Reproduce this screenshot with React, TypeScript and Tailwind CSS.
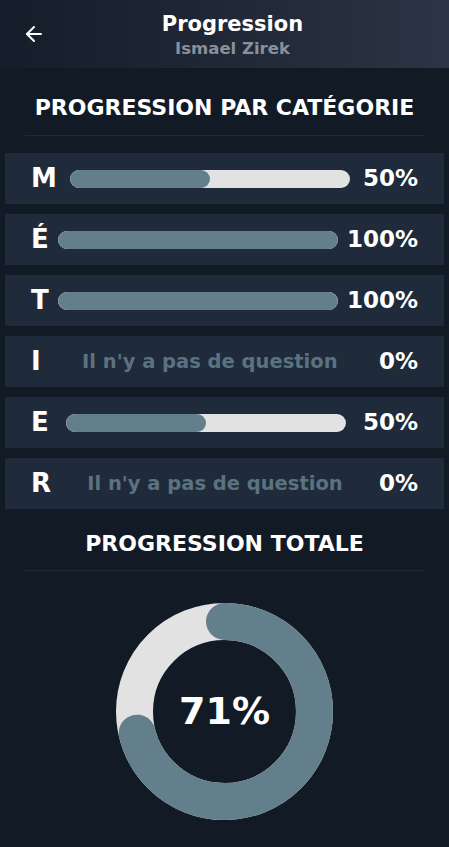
import { ArrowLeft } from "lucide-react";

const font = { fontFamily: "'DejaVu Sans', 'Noto Sans', sans-serif" };

type Cat = { letter: string; value: number | null };

const cats: Cat[] = [
  { letter: "M", value: 50 },
  { letter: "É", value: 100 },
  { letter: "T", value: 100 },
  { letter: "I", value: null },
  { letter: "E", value: 50 },
  { letter: "R", value: null },
];

function Row({ cat }: { cat: Cat }) {
  return (
    <div className="flex h-[51px] items-center justify-between bg-[#1f2a3b] px-[26px]">
      <span className="text-[26px] font-bold text-white">{cat.letter}</span>
      {cat.value === null ? (
        <span className="text-[19.5px] font-bold text-[#5b7280]">Il n'y a pas de question</span>
      ) : (
        <div className="h-[18px] w-[280px] overflow-hidden rounded-full bg-[#e2e2e2]">
          {/* width from data */}
          <div className="h-full rounded-full bg-[#637f8b]" style={{ width: `${cat.value}%` }} />
        </div>
      )}
      <span className="text-[23px] font-bold text-white">{cat.value ?? 0}%</span>
    </div>
  );
}

function Donut({ value }: { value: number }) {
  const r = 90;
  const c = 2 * Math.PI * r;
  return (
    <div className="relative h-[219px] w-[219px]">
      <svg width="219" height="219" viewBox="0 0 219 219">
        <circle cx="109.5" cy="109.5" r={r} fill="none" stroke="#e2e2e2" strokeWidth="37" />
        <circle
          cx="109.5"
          cy="109.5"
          r={r}
          fill="none"
          stroke="#637f8b"
          strokeWidth="37"
          strokeLinecap="round"
          strokeDasharray={`${(c * value) / 100} ${c}`}
          transform="rotate(-90 109.5 109.5)"
        />
      </svg>
      <div className="absolute inset-0 flex items-center justify-center text-[38px] font-bold text-white">
        {value}%
      </div>
    </div>
  );
}

export default function App() {
  return (
    <div className="min-h-[847px] w-full bg-[#111a25]" style={font}>
      {/* Header */}
      <div className="relative flex h-[68px] flex-col items-center justify-center bg-gradient-to-r from-[#151d2a] to-[#2c3445]">
        <button className="absolute left-[22px] top-[22px] text-white">
          <ArrowLeft size={24} strokeWidth={2} />
        </button>
        <div className="ml-4 mt-1 text-[21px] font-bold leading-[26px] text-white">Progression</div>
        <div className="ml-4 text-[16.5px] font-bold leading-[24px] text-[#8a909b]">Ismael Zirek</div>
      </div>

      {/* Par catégorie */}
      <div className="flex h-[67px] items-center justify-center pt-[12px]">
        <h2 className="text-[22px] font-bold text-white">PROGRESSION PAR CATÉGORIE</h2>
      </div>
      <div className="mx-[25px] h-px bg-[#1f2836]" />

      <div className="mt-[17px] flex flex-col gap-[10px] px-[5px]">
        {cats.map((c) => (
          <Row key={c.letter} cat={c} />
        ))}
      </div>

      {/* Totale */}
      <div className="flex h-[61px] items-center justify-center pt-[8px]">
        <h2 className="text-[22px] font-bold text-white">PROGRESSION TOTALE</h2>
      </div>
      <div className="mx-[25px] h-px bg-[#1f2836]" />

      <div className="flex justify-center pt-[31px] pb-4">
        <Donut value={71} />
      </div>
    </div>
  );
}
